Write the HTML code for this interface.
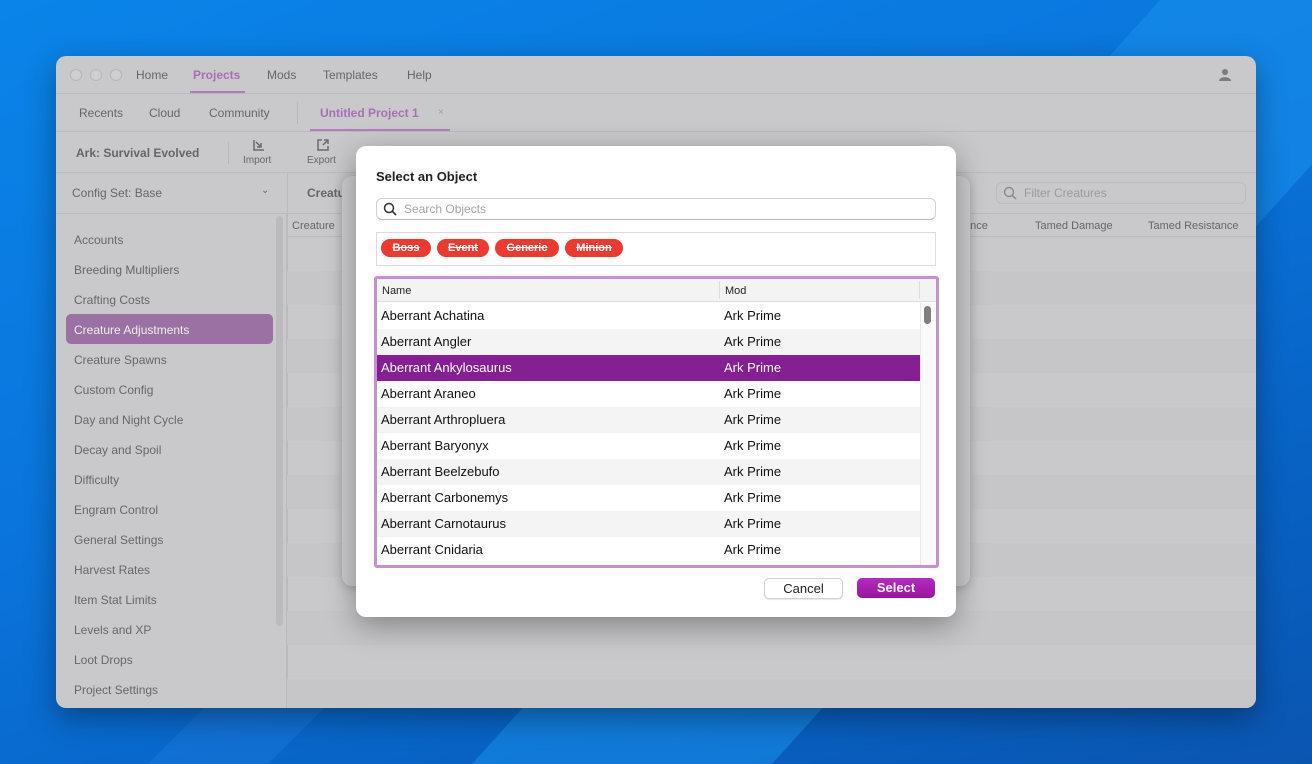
<!DOCTYPE html>
<html><head><style>
*{margin:0;padding:0;box-sizing:border-box}
html,body{width:1312px;height:764px;overflow:hidden}
body{position:relative;font-family:"Liberation Sans",sans-serif;font-size:12px;
background:linear-gradient(160deg,#0a84e8 0%,#0a74dc 45%,#0862c4 75%,#0a55b0 100%);}
.abs{position:absolute}
.win{left:56px;top:56px;width:1200px;height:652px;border-radius:10px;background:#c9c9cb;overflow:hidden;box-shadow:0 10px 30px rgba(0,0,0,.35)}
.t{position:absolute;color:#66666a;white-space:nowrap}
.side{position:absolute;left:0;top:158px;width:231px;height:494px;border-right:1px solid #bbbbbd}
.side div{position:absolute;left:18px;color:#67676b;font-size:12px}
.row{position:absolute;left:231px;width:969px;height:34px;background:#c6c6c8}
.modal{left:356px;top:146px;width:600px;height:471px;background:#fff;border-radius:10px;box-shadow:0 8px 30px rgba(0,0,0,.35)}
.tag{position:absolute;top:93px;height:18px;border-radius:9px;background:#ee3a2e;color:#fff;font-weight:bold;font-size:11px;text-decoration:line-through;text-align:center;line-height:18px}
.tr{position:absolute;left:0;width:544px;height:26px;font-size:13px;color:#111;line-height:26px}
.tr span{position:absolute}
.tr .a{left:4px}.tr .b{left:347px}
</style></head><body>
<div class="abs" style="left:1160px;top:0;width:300px;height:764px;background:#1a94f0;transform:skewX(-42deg);transform-origin:0 0;opacity:.5"></div>
<div class="abs" style="left:180px;top:700px;width:120px;height:64px;background:#1673d6;transform:skewX(-45deg);opacity:.7"></div>
<div class="abs win">
 <div class="abs" style="left:14px;top:13px;width:12px;height:12px;border-radius:6px;border:1px solid #b6b6b8;background:#cfcfd1"></div>
 <div class="abs" style="left:34px;top:13px;width:12px;height:12px;border-radius:6px;border:1px solid #b6b6b8;background:#cfcfd1"></div>
 <div class="abs" style="left:54px;top:13px;width:12px;height:12px;border-radius:6px;border:1px solid #b6b6b8;background:#cfcfd1"></div>
 <div class="t" style="left:80px;top:12px">Home</div>
 <div class="t" style="left:137px;top:12px;color:#a86fb5;font-weight:bold">Projects</div>
 <div class="abs" style="left:134px;top:35px;width:55px;height:2px;background:#b07cbd"></div>
 <div class="t" style="left:211px;top:12px">Mods</div>
 <div class="t" style="left:267px;top:12px">Templates</div>
 <div class="t" style="left:351px;top:12px">Help</div>
 <svg class="abs" style="left:1162px;top:12px" width="14" height="14" viewBox="0 0 14 14"><circle cx="7" cy="4" r="3" fill="#7b7b7d"/><path d="M1 13 C1 8 13 8 13 13Z" fill="#7b7b7d"/></svg>
 <div class="abs" style="left:0;top:37px;width:1200px;height:1px;background:#bbbbbd"></div>
 <div class="t" style="left:23px;top:50px">Recents</div>
 <div class="t" style="left:93px;top:50px">Cloud</div>
 <div class="t" style="left:153px;top:50px">Community</div>
 <div class="abs" style="left:241px;top:46px;width:1px;height:22px;background:#b8b8ba"></div>
 <div class="t" style="left:264px;top:50px;color:#a86fb5;font-weight:bold">Untitled Project 1</div>
 <div class="t" style="left:382px;top:51px;color:#a0a0a2;font-size:10px">×</div>
 <div class="abs" style="left:254px;top:73px;width:140px;height:2px;background:#b07cbd"></div>
 <div class="abs" style="left:0;top:75px;width:1200px;height:1px;background:#bbbbbd"></div>
 <div class="t" style="left:20px;top:90px;font-weight:bold">Ark: Survival Evolved</div>
 <div class="abs" style="left:172px;top:86px;width:1px;height:22px;background:#b8b8ba"></div>
 <svg class="abs" style="left:197px;top:83px" width="12" height="12" viewBox="0 0 12 12"><path d="M1 1v10h10M3 3l5 5M8 4v4H4" fill="none" stroke="#6b6b6d" stroke-width="1.5"/></svg>
 <div class="t" style="left:187px;top:99px;font-size:10px">Import</div>
 <svg class="abs" style="left:261px;top:83px" width="12" height="12" viewBox="0 0 12 12"><path d="M5 1H1v10h10V7M6 6l5-5M7 1h4v4" fill="none" stroke="#6b6b6d" stroke-width="1.5"/></svg>
 <div class="t" style="left:251px;top:99px;font-size:10px">Export</div>
 <div class="abs" style="left:0;top:116px;width:1200px;height:1px;background:#bbbbbd"></div>
 <div class="t" style="left:16px;top:130px">Config Set: Base</div>
 <div class="t" style="left:205px;top:129px;font-size:10px">⌄</div>
 <div class="abs" style="left:231px;top:117px;width:1px;height:535px;background:#bbbbbd"></div>
 <div class="abs" style="left:0;top:157px;width:1200px;height:1px;background:#bbbbbd"></div>
 <div class="t" style="left:251px;top:130px;font-weight:bold">Creatu</div>
 <div class="abs" style="left:940px;top:126px;width:250px;height:22px;border:1px solid #bcbcbe;border-radius:6px"></div>
 <svg class="abs" style="left:947px;top:130px" width="14" height="14" viewBox="0 0 14 14"><circle cx="6" cy="6" r="4.5" fill="none" stroke="#8a8a8c" stroke-width="1.4"/><path d="M9.3 9.3L13 13" stroke="#8a8a8c" stroke-width="1.5"/></svg>
 <div class="t" style="left:968px;top:130px;color:#9a9a9c">Filter Creatures</div>
 <div class="t" style="left:236px;top:164px;font-size:11px">Creature</div>
 <div class="t" style="left:905px;top:164px;font-size:11px">tance</div>
 <div class="t" style="left:979px;top:164px;font-size:11px">Tamed Damage</div>
 <div class="t" style="left:1092px;top:164px;font-size:11px">Tamed Resistance</div>
 <div class="abs" style="left:231px;top:180px;width:969px;height:1px;background:#bbbbbd"></div>
 <div class="row" style="top:215px"></div>
 <div class="row" style="top:283px"></div>
 <div class="row" style="top:351px"></div>
 <div class="row" style="top:419px"></div>
 <div class="row" style="top:487px"></div>
 <div class="row" style="top:555px"></div>
 <div class="row" style="top:623px"></div>
 <div class="abs" style="left:286px;top:120px;width:628px;height:410px;background:#cdcdcf;border-radius:10px;box-shadow:0 2px 10px rgba(0,0,0,.2)"></div>
 <div class="abs" style="left:220px;top:160px;width:7px;height:410px;border-radius:4px;background:#bbbbbd"></div>
 <div class="side">
  <div style="top:19px">Accounts</div><div style="top:49px">Breeding Multipliers</div><div style="top:79px">Crafting Costs</div>
  <div style="left:10px;top:100px;width:207px;height:30px;border-radius:5px;background:#9b70a2"></div>
  <div style="top:109px;color:#eee">Creature Adjustments</div>
  <div style="top:139px">Creature Spawns</div><div style="top:169px">Custom Config</div><div style="top:199px">Day and Night Cycle</div>
  <div style="top:229px">Decay and Spoil</div><div style="top:259px">Difficulty</div><div style="top:289px">Engram Control</div>
  <div style="top:319px">General Settings</div><div style="top:349px">Harvest Rates</div><div style="top:379px">Item Stat Limits</div>
  <div style="top:409px">Levels and XP</div><div style="top:439px">Loot Drops</div><div style="top:469px">Project Settings</div>
 </div>
</div>
<div class="abs modal">
 <div class="abs" style="left:20px;top:23px;font-weight:bold;font-size:13px;color:#222">Select an Object</div>
 <div class="abs" style="left:20px;top:52px;width:560px;height:22px;border:1px solid #d2d2d2;border-bottom-color:#bbb;border-radius:6px"></div>
 <svg class="abs" style="left:27px;top:56px" width="14" height="14" viewBox="0 0 14 14"><circle cx="6" cy="6" r="4.5" fill="none" stroke="#333" stroke-width="1.5"/><path d="M9.3 9.3L13 13" stroke="#333" stroke-width="1.6"/></svg>
 <div class="abs" style="left:48px;top:56px;color:#a5a5a5;font-size:12px">Search Objects</div>
 <div class="abs" style="left:20px;top:86px;width:560px;height:34px;border:1px solid #dcdcdc"></div>
 <div class="tag" style="left:25px;width:50px">Boss</div>
 <div class="tag" style="left:81px;width:52px">Event</div>
 <div class="tag" style="left:139px;width:64px">Generic</div>
 <div class="tag" style="left:209px;width:58px">Minion</div>
 <div class="abs" style="left:18px;top:130px;width:565px;height:292px;border:3px solid #c591d2;border-radius:3px;overflow:hidden">
  <div class="abs" style="left:0;top:0;width:559px;height:23px;background:#f3f3f3;border-bottom:1px solid #ddd"></div>
  <div class="abs" style="left:5px;top:6px;font-size:11px;color:#222">Name</div>
  <div class="abs" style="left:342px;top:2px;width:1px;height:18px;background:#ddd"></div>
  <div class="abs" style="left:348px;top:6px;font-size:11px;color:#222">Mod</div>
  <div class="abs" style="left:542px;top:2px;width:1px;height:18px;background:#ddd"></div>
  <div class="abs" style="left:0;top:24px;width:559px;height:265px">
   <div class="tr" style="top:0;background:#fff"><span class="a">Aberrant Achatina</span><span class="b">Ark Prime</span></div>
   <div class="tr" style="top:26px;background:#f4f4f4"><span class="a">Aberrant Angler</span><span class="b">Ark Prime</span></div>
   <div class="tr" style="top:52px;background:#861f94;color:#fff"><span class="a">Aberrant Ankylosaurus</span><span class="b">Ark Prime</span></div>
   <div class="tr" style="top:78px;background:#fff"><span class="a">Aberrant Araneo</span><span class="b">Ark Prime</span></div>
   <div class="tr" style="top:104px;background:#f4f4f4"><span class="a">Aberrant Arthropluera</span><span class="b">Ark Prime</span></div>
   <div class="tr" style="top:130px;background:#fff"><span class="a">Aberrant Baryonyx</span><span class="b">Ark Prime</span></div>
   <div class="tr" style="top:156px;background:#f4f4f4"><span class="a">Aberrant Beelzebufo</span><span class="b">Ark Prime</span></div>
   <div class="tr" style="top:182px;background:#fff"><span class="a">Aberrant Carbonemys</span><span class="b">Ark Prime</span></div>
   <div class="tr" style="top:208px;background:#f4f4f4"><span class="a">Aberrant Carnotaurus</span><span class="b">Ark Prime</span></div>
   <div class="tr" style="top:234px;background:#fff"><span class="a">Aberrant Cnidaria</span><span class="b">Ark Prime</span></div>
   <div class="abs" style="left:543px;top:0;width:16px;height:265px;background:#fafafa;border-left:1px solid #e8e8e8"></div>
   <div class="abs" style="left:547px;top:3px;width:7px;height:18px;border-radius:4px;background:#7f7f7f"></div>
  </div>
 </div>
 <div class="abs" style="left:408px;top:432px;width:79px;height:21px;border:1px solid #d0d0d0;border-radius:5px;box-shadow:0 1px 1px rgba(0,0,0,.1);text-align:center;line-height:19px;font-size:13px;color:#222">Cancel</div>
 <div class="abs" style="left:501px;top:432px;width:78px;height:20px;border-radius:5px;background:linear-gradient(#b42bc0,#9a139f);text-align:center;line-height:20px;font-size:13px;color:#fff;font-weight:bold">Select</div>
</div>
</body></html>
